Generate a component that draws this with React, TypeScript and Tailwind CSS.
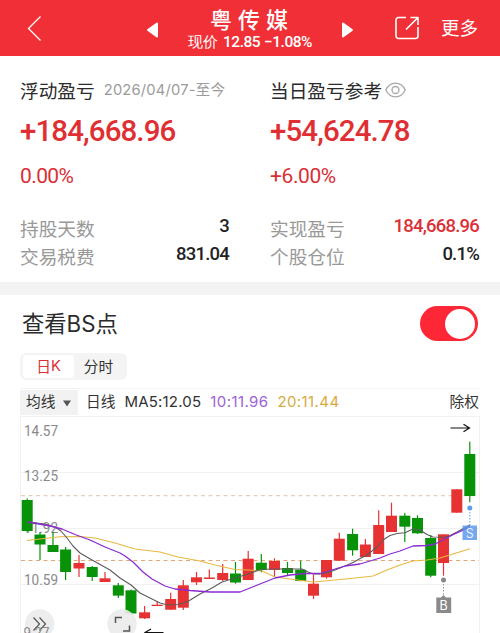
import clsx from "clsx";

const UP = "#e63232";
const DOWN = "#079207";

// [center x, high, low, body top, body bottom, rising]
type Candle = [number, number, number, number, number, boolean];

const candles: Candle[] = [
  [27.2, 498.5, 532.5, 500, 531, false],
  [40, 532, 560, 534.5, 544.5, false],
  [53, 532, 552, 545, 552, false],
  [65.6, 547, 580, 549.5, 572, false],
  [79, 555, 577, 563, 568.5, true],
  [92.2, 566, 581, 567, 577, false],
  [105, 572, 582, 578.3, 582, true],
  [118.3, 583, 598, 585.3, 595.6, false],
  [131, 589.5, 614.7, 590.3, 613.5, false],
  [144.6, 606, 619, 612.3, 618.3, true],
  [157.2, 601, 606, 604.7, 606, true],
  [170.7, 592.7, 609.7, 599, 609.7, true],
  [183.3, 580, 610, 585.3, 607.7, true],
  [196.5, 572, 585, 577.3, 582.3, true],
  [209.3, 569.5, 579, 577.5, 579, true],
  [222.7, 564, 581, 573, 580, true],
  [235.5, 562, 583.7, 573.5, 582.5, false],
  [248.2, 551, 580, 558.7, 580, true],
  [261.3, 554, 572.3, 562.7, 570, false],
  [274.5, 558.3, 576.7, 561, 570, true],
  [287.5, 562, 576, 568, 573, false],
  [300.7, 560.7, 581.3, 569.7, 581, false],
  [313.5, 575, 599, 583.7, 595.7, true],
  [326.5, 560, 578.7, 560, 577.3, true],
  [339.3, 532.7, 560.7, 538.7, 560.7, true],
  [352.6, 528.7, 555.7, 534, 550.3, false],
  [365.4, 539, 557, 544.5, 557, true],
  [378.7, 510.3, 554, 525, 554, true],
  [391.5, 502.7, 532, 515.7, 532, true],
  [404.8, 513, 542, 515.7, 526.7, false],
  [417.5, 515.3, 534, 518, 533.3, false],
  [430.7, 535, 577.3, 538, 575.7, false],
  [443.5, 534.3, 575.7, 534.3, 563, true],
  [456.8, 489.3, 512.7, 489.3, 512.7, true],
  [469.8, 441.7, 502.3, 454, 496, false],
];

const ma5 =
  "28,522 45,524 55,527 61,531 67,538 73,546 80,553 92,560 110,570 120,578 131,585 140,593 150,598 160,603 168,605 178,604.5 187,602 200,594 212,588 222,582 235,578 248,574 259,570 270,569 285,569 302,569 308,572 313,574 320,574 330,572 345,566 354,562 361,558 367,555 377,547 383,540 390,535.5 397,533.5 405,532.7 413,529 420,530 427,534.5 433,537 443,537.3 448,536.5 457,532 470,525";
const ma10 =
  "28,522 50,526 62,529 75,534.5 90,540 105,547 120,553 125,556 133,562 143,572 152,579 165,586 175,589 190,590.5 210,592 240,592 250,588 260,584 275,578 290,575 305,573.5 320,573.5 335,569 345,566 360,564 370,561 380,558 390,554 400,551 413,546 427,545.5 435,544 443,540 453,534.7 470,527";
const ma20 =
  "27,540.5 40,539 60,536.7 80,536.5 95,538 115,543 120,544.5 135,549 160,552 178,557 200,561 215,565 235,569.5 248,570 262,571 275,577 290,579 313,582 330,580.5 345,579 360,577.5 373,576 387,570 400,565 413,561 427,560 440,558 453,554 470,548.7";

const axisLabels = [
  { text: "14.57", y: 436 },
  { text: "13.25", y: 481 },
  { text: "11.92", y: 533 },
  { text: "10.59", y: 585.3 },
];

const num = "font-[Roboto,'Liberation_Sans',sans-serif]";

function Header() {
  return (
    <header className="flex h-14 items-center bg-[#f03036] text-white">
      <svg className="ml-[27px] h-7 w-4" viewBox="0 0 16 28" fill="none" stroke="currentColor" strokeWidth="1.3">
        <path d="M13.5 2.5 1.5 14.5l12 12" />
      </svg>
      <svg className="mt-1 ml-[103px] h-4 w-3" viewBox="0 0 12 16" fill="currentColor" stroke="currentColor" strokeLinejoin="round" strokeWidth="2">
        <path d="M11 1.5v13L2 8z" />
      </svg>
      <div className="flex w-[184px] flex-col items-center">
        <h1 className="mt-px pl-1 text-[22px] leading-[27px] font-medium tracking-[6px]">粤传媒</h1>
        <p className={clsx(num, "flex gap-[5px] text-[15.5px] leading-[20px] font-medium tracking-[-0.5px]")}>
          <span className="text-[15px] tracking-normal">现价</span>
          <span>12.85</span>
          <span className="-ml-px">−1.08%</span>
        </p>
      </div>
      <svg className="mt-1 h-4 w-3" viewBox="0 0 12 16" fill="currentColor" stroke="currentColor" strokeLinejoin="round" strokeWidth="2">
        <path d="M1 1.5v13L10 8z" />
      </svg>
      <svg className="ml-[41px] h-6 w-6" viewBox="0 0 24 24" fill="none" stroke="currentColor" strokeWidth="1.6" strokeLinejoin="round">
        <path d="M11 1.5H3.5a2.5 2.5 0 0 0-2.5 2.5v16a2.5 2.5 0 0 0 2.5 2.5h17a2.5 2.5 0 0 0 2.5-2.5v-9" />
        <path d="M15.5 1.5H23V9M23 1.5 11 13.5" />
      </svg>
      <span className="ml-[22px] text-[18.5px]">更多</span>
    </header>
  );
}

function Row({ label, value, red }: { label: string; value: string; red?: boolean }) {
  return (
    <div className="flex h-7 items-center justify-between">
      <span className="text-[18.7px] text-[#999]">{label}</span>
      <span
        className={clsx(
          num,
          "-mt-[3px] text-[18.5px] font-medium tracking-[-0.8px]",
          red ? "text-[#dc3036]" : "text-[#222]",
        )}
      >
        {value}
      </span>
    </div>
  );
}

function Summary() {
  return (
    <section className="grid h-[226px] grid-cols-[209px_209px] gap-x-[41px] px-5 pt-[20px]">
      <div>
        <div className="flex h-7 items-center gap-[9px]">
          <span className="text-[18.7px] text-[#2b2b2b]">浮动盈亏</span>
          <span className="font-[Inter,'Noto_Sans_CJK_SC',sans-serif] text-[14.7px] tracking-[0.2px] whitespace-nowrap text-[#9b9b9b]">
            2026/04/07-至今
          </span>
        </div>
        <div className={clsx(num, "mt-[7px] h-10 text-[29.5px] leading-10 font-medium tracking-[-0.9px] text-[#e02f33]")}>
          +184,668.96
        </div>
        <div className={clsx(num, "mt-2.5 mb-[23px] h-[30px] text-[21px] leading-[30px] tracking-[-0.6px] text-[#d93036]")}>
          0.00%
        </div>
        <Row label="持股天数" value="3" />
        <Row label="交易税费" value="831.04" />
      </div>
      <div>
        <div className="flex h-7 items-center">
          <span className="text-[18.7px] text-[#2b2b2b]">当日盈亏参考</span>
          <svg className="ml-[3px] h-4 w-[21px]" viewBox="0 0 21 16" fill="none" stroke="#a8a8a8" strokeWidth="1.3">
            <path d="M.8 8C3 3.500 6.500 1.200 10.500 1.200S18 3.500 20.200 8C18 12.500 14.500 14.800 10.500 14.800S3 12.500.8 8z" />
            <circle cx="10.500" cy="8" r="3.500" />
          </svg>
        </div>
        <div className={clsx(num, "mt-[7px] h-10 text-[29.5px] leading-10 font-medium tracking-[-0.9px] text-[#e02f33]")}>
          +54,624.78
        </div>
        <div className={clsx(num, "mt-2.5 mb-[23px] h-[30px] text-[21px] leading-[30px] tracking-[-0.4px] text-[#d93036]")}>
          +6.00%
        </div>
        <Row label="实现盈亏" value="184,668.96" red />
        <Row label="个股仓位" value="0.1%" />
      </div>
    </section>
  );
}

function Chart() {
  return (
    <svg className="block h-[217px] w-[460px]" viewBox="20 416 460 217">
      <g stroke="#f1f1f1">
        <path d="M20 416.500H480M20 472.500H480M20 528.500H480M20 584.500H480M20.500 416V633M479.500 416V633" />
      </g>
      <path d="M21 495.700H479" stroke="#d9c6b4" strokeDasharray="4 3.500" />
      <path d="M21 560.500H479" stroke="#e3a877" strokeDasharray="4 3.500" />

      <g className={num} fontSize="15" fill="#8a8a8a">
        {axisLabels.map((l) => (
          <text key={l.text} x="24" y={l.y} textLength="34" lengthAdjust="spacingAndGlyphs">
            {l.text}
          </text>
        ))}
      </g>

      {candles.map(([x, high, low, top, bottom, rising]) => (
        <g key={x} fill={rising ? UP : DOWN}>
          <rect x={x - 0.6} y={high} width="1.2" height={low - high} />
          <rect x={x - 5.5} y={top} width="11" height={bottom - top} />
        </g>
      ))}

      <g fill="none" strokeWidth="1.100" strokeLinejoin="round">
        <polyline points={ma20} stroke="#e8b840" />
        <polyline points={ma5} stroke="#5c5c5c" />
        <polyline points={ma10} stroke="#8a2bd2" strokeWidth="1.300" />
      </g>

      {/* Buy / sell markers */}
      <circle cx="443.500" cy="580" r="2.500" fill="#888" />
      <path d="M443.500 584V597" stroke="#999" strokeDasharray="1.500 1.500" />
      <path d="M436.300 597.500h4.700l2.500-2.500 2.500 2.500h5.200v15.500h-14.900z" fill="#8a8a8a" />
      <circle cx="469.800" cy="508" r="2.500" fill="#5f9de8" />
      <path d="M469.800 512V525" stroke="#6aa2e6" strokeDasharray="1.500 1.500" />
      <path d="M462.500 525.500h14.500v14.500h-14.500z" fill="#5795ea" fillOpacity=".82" />
      <g className="font-[Inter,sans-serif]" fontSize="12.500" textAnchor="middle" fill="#fff">
        <text x="443.700" y="609.700">B</text>
        <text x="469.800" y="537.500" fillOpacity=".85">S</text>
      </g>

      {/* High / low pointers */}
      <g fill="none" stroke="#111" strokeWidth="1.200">
        <path d="M450.500 428H469.500M463.500 424.200 469.500 428 463.500 431.800" />
        <path d="M163.500 632.500H145M151 629 145 632.500 151 636" />
      </g>

      {/* Floating controls */}
      <g fill="#ebebeb" fillOpacity=".9">
        <circle cx="39.700" cy="624" r="14.700" />
        <circle cx="122" cy="624" r="14.700" />
      </g>
      <g fill="none" stroke="#555" strokeWidth="1.200">
        <path d="M33.500 617.500 39.500 624 33.500 630.500M39.500 617.500 45.500 624 39.500 630.500" />
        <path d="M115.500 623V617.500H122M129.500 625.500V631H123" strokeWidth="1.500" />
      </g>
      <text className={num} x="23.500" y="638" fontSize="15" fill="#8a8a8a" textLength="26" lengthAdjust="spacingAndGlyphs">
        9.27
      </text>
    </svg>
  );
}

export default function App() {
  return (
    <div className="h-[633px] w-[500px] overflow-hidden bg-white font-['Noto_Sans_CJK_SC',sans-serif]">
      <Header />
      <Summary />
      <div className="h-[13px] bg-[#f3f3f3]" />

      <section className="px-5">
        <div className="flex h-[58px] items-center justify-between px-0.5 pb-px">
          <h2 className="text-[22.3px] text-[#2b2b2b]">
            查看<span className="font-[Inter,sans-serif]">BS</span>点
          </h2>
          <div className="flex h-[35px] w-[58px] items-center justify-end rounded-full bg-[#fe2736] pr-[3px]">
            <div className="h-[30px] w-[30px] rounded-full bg-white" />
          </div>
        </div>

        <div className="flex h-[27px] w-[107px] items-center rounded-md bg-[#f4f4f4] pl-[3px] text-[14.7px]">
          <div className="flex h-[23px] w-[51px] items-center justify-center rounded bg-white text-[#d93036]">
            日<span className="font-[Inter,sans-serif]">K</span>
          </div>
          <div className="flex-1 pr-1 text-center text-[#333]">分时</div>
        </div>

        <div className="mt-2 flex h-7 items-center border-t border-[#f3f3f3] font-[Inter,'Noto_Sans_CJK_SC',sans-serif] text-[15px] tracking-[0.2px] text-[#333]">
          <div className="flex h-[25px] w-[58px] items-center justify-between bg-[#f2f2f2] pr-[7px] pl-[6px] text-[14.7px] tracking-normal">
            均线
            <svg className="mt-0.5 h-[7px] w-2" viewBox="0 0 8 7" fill="#555">
              <path d="M0 .5h8L4 6.500z" />
            </svg>
          </div>
          <span className="ml-2 text-[14.7px] tracking-normal">日线</span>
          <span className="ml-[9px]">MA5:12.05</span>
          <span className="ml-[9px] tracking-[0.4px] text-[#9d62d6]">10:11.96</span>
          <span className="ml-[9px] tracking-[0.4px] text-[#d9a941]">20:11.44</span>
          <span className="-mr-px ml-auto pr-0.5 text-[14.7px] tracking-normal">除权</span>
        </div>

        <Chart />
      </section>
    </div>
  );
}
